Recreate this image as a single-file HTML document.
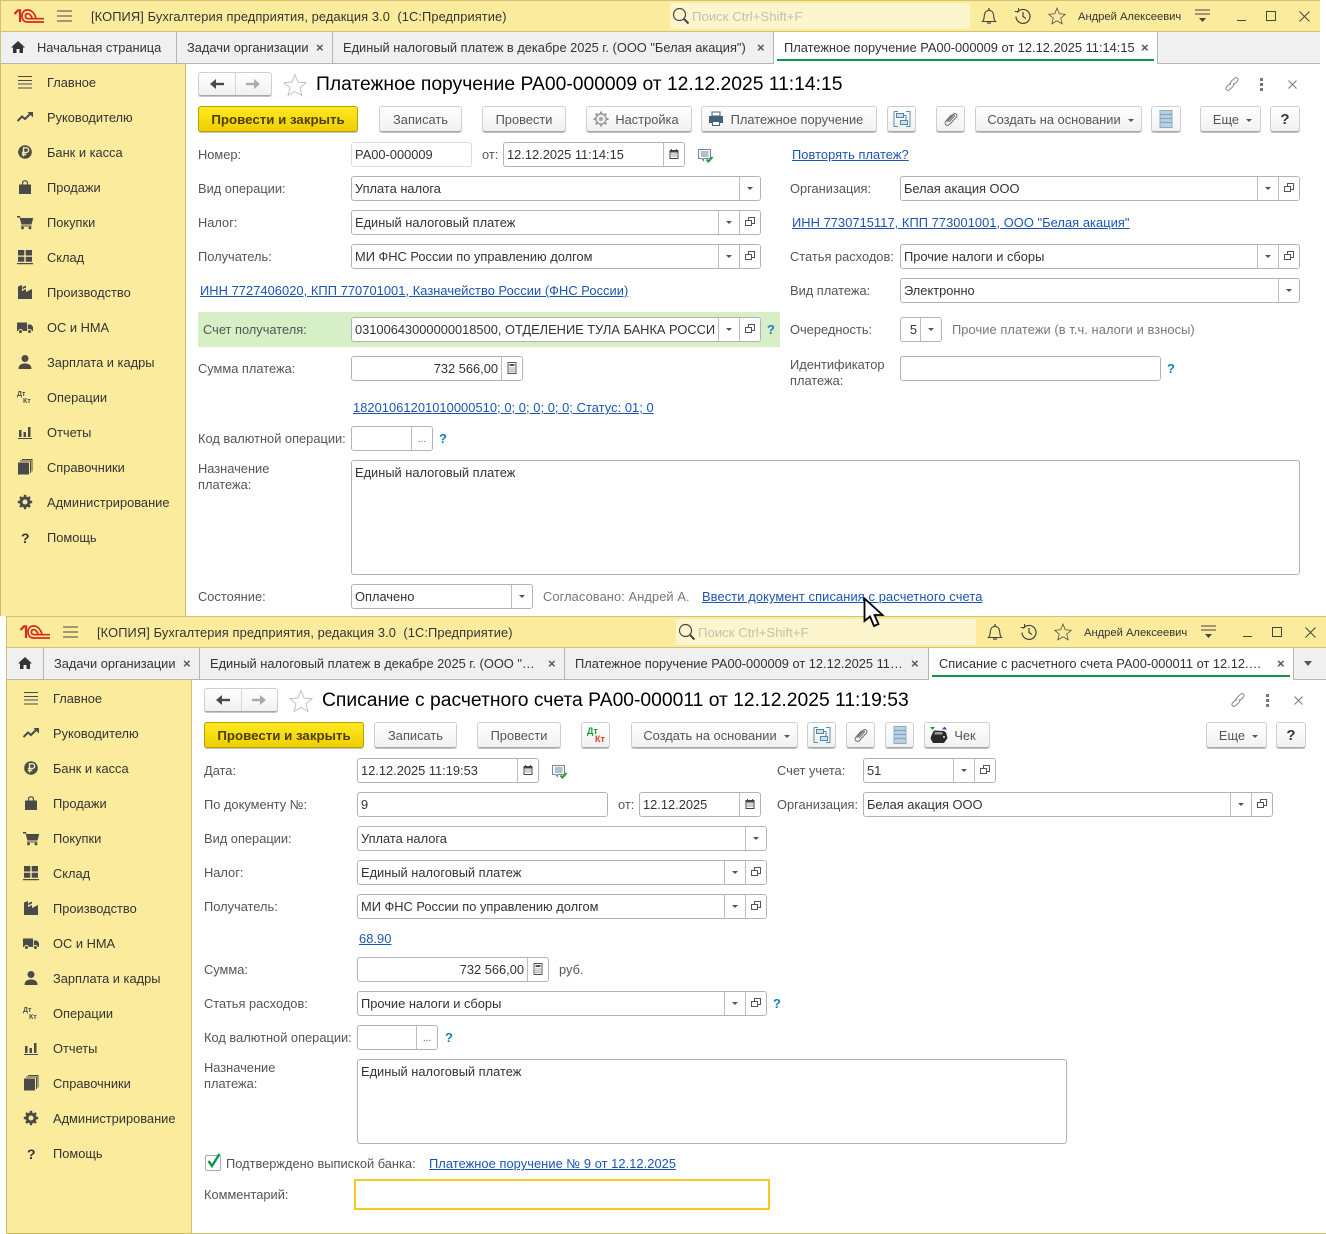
<!DOCTYPE html>
<html lang="ru"><head><meta charset="utf-8"><title>1С</title>
<style>
html,body{margin:0;padding:0;background:#fff}
body{width:1326px;height:1234px;position:relative;overflow:hidden;font:12.85px/16px "Liberation Sans",sans-serif;color:#333}
.w{position:absolute;width:1320px;overflow:hidden;background:#fff}
.t,.f,.b,.ta,svg.i{position:absolute}
.t{white-space:nowrap;margin-top:1px}
.l{color:#555}
.a{color:#1a55b5;text-decoration:underline;letter-spacing:.06px}
.q{color:#0f7fb8;font-weight:bold}
.top{position:absolute;left:0;top:0;right:0;height:32px;background:#fbec9d;box-sizing:border-box;border:1px solid #cfc36f;border-width:1px 0 1px 1px}
.tabs{position:absolute;left:0;top:32px;right:0;height:32px;background:#f0f0f0;box-sizing:border-box;border-bottom:1px solid #b5b5b5;border-left:1px solid #cfc36f}
.dv{position:absolute;top:32px;height:31px;width:1px;background:#b5b5b5}
.at{position:absolute;top:32px;height:32px;background:#fff}
.gr{position:absolute;top:59px;height:2px;background:#0d9548}
.sb{position:absolute;left:0;top:64px;width:186px;background:#fbec9d;box-sizing:border-box;border-left:1px solid #c9bd5f;border-right:1px solid #cfc36f}
.search{position:absolute;left:670px;top:3px;width:300px;height:26px;background:#fcf5cd;border-radius:3px}
.x{color:#555;font-weight:bold;font-size:13px}
.f{box-sizing:border-box;height:25px;border:1px solid #b3b3b3;border-radius:3px;background:#fff;padding-left:3px;line-height:23px;overflow:hidden;white-space:nowrap;color:#333}
.ta{box-sizing:border-box;border:1px solid #b3b3b3;border-radius:3px;background:#fff;padding:4px 3px;color:#333}
.r{position:absolute;right:0;top:0;bottom:0;display:flex;background:#fff}
.r>span{position:relative;display:block;width:20px;border-left:1px solid #bdbdbd}
.dr::after{content:"";position:absolute;left:7px;top:10px;border:3px solid transparent;border-top:3px solid #555;border-bottom:0}
.op::before{content:"";position:absolute;left:8px;top:6px;width:5px;height:5px;border:1px solid #555}
.op::after{content:"";position:absolute;left:5px;top:9px;width:5px;height:4px;border:1px solid #555;background:#fff}
.dots{text-align:center;font-size:10px;color:#666;line-height:25px}
.b{top:106px;height:26px;box-sizing:border-box;border:1px solid #cfcfcf;border-bottom-color:#a8a8a8;border-radius:3px;background:linear-gradient(#fff,#f1f1f1);box-shadow:0 1px 0 #c4c4c4;text-align:center;line-height:25px;color:#555;white-space:nowrap}
.y{background:linear-gradient(#ffe924,#efcf00);border:1px solid #b8a000;color:#4d3f00;font-weight:bold;font-size:13.3px}
.car{display:inline-block;width:0;height:0;border:3px solid transparent;border-top-color:#555;border-bottom:0;margin-left:7px;vertical-align:2px}
.s{font-size:13.2px;color:#c4c1ad}
.h{font-size:19.3px;line-height:22px;color:#000}
.tt{letter-spacing:.1px}
</style></head><body>
<svg width="0" height="0" style="position:absolute">
<defs>
<symbol id="logo" viewBox="0 0 30 14"><path d="M.5 5 4 1.300H6V13" fill="none" stroke="#d62a1c" stroke-width="2.200"/><path d="M22 9.500C20.500 3.500 17 1 13.500 1 9.500 1 8 4 8 7 8 11 10.500 13 13.500 13H30M18.300 9.500C17 6 15.500 4.600 13.500 4.600 12 4.600 11.400 6 11.400 7 11.400 8.500 12.300 9.700 14 9.700H30" fill="none" stroke="#d62a1c" stroke-width="1.700"/></symbol>
<symbol id="s0" viewBox="0 0 16 16"><path d="M1 2.500h14M1 6.500h14M1 10h14M1 14h14" stroke="#4a4a4a"/></symbol>
<symbol id="s1" viewBox="0 0 16 16"><path d="M0.500 12 5 7.500 8 10 14 4" fill="none" stroke="#4a4a4a" stroke-width="2"/><path d="M10.500 3H16V8.500z" fill="#4a4a4a"/></symbol>
<symbol id="s2" viewBox="0 0 16 16"><circle cx="8" cy="8" r="6.800" fill="#4a4a4a"/><path d="M6.500 12.500V3.800H9.300a2.300 2.300 0 0 1 0 4.700H4.800M4.800 10.500h4.500" fill="none" stroke="#fbec9d" stroke-width="1.400"/></symbol>
<symbol id="s3" viewBox="0 0 16 16"><path d="M2 5.500H5V3.500C5 .5 11 .5 11 3.500V5.500H14V15H2z" fill="#4a4a4a"/><path d="M6.200 5.500V3.500C6.200 2 9.800 2 9.800 3.500V5.500" fill="#fbec9d"/></symbol>
<symbol id="s4" viewBox="0 0 16 16"><path d="M0 2H3L3.500 4H16V5L14.500 10.500H4.500L2.500 3.500H0z" fill="#4a4a4a"/><path d="M4 11.500H14.500V12.500H4z" fill="#4a4a4a"/><circle cx="5.500" cy="14" r="1.400" fill="#4a4a4a"/><circle cx="13" cy="14" r="1.400" fill="#4a4a4a"/></symbol>
<symbol id="s5" viewBox="0 0 16 16"><path d="M1 1h6.300v5.500H1zM8.700 1H15v5.500H8.700zM1 7.700h6.300v5H1zM8.700 7.700H15v5H8.700zM0 14h16v1.200H0z" fill="#4a4a4a"/></symbol>
<symbol id="s6" viewBox="0 0 16 16"><path d="M1 15V2.500L5 1V7L9 5V8L15 5V15z" fill="#4a4a4a"/><path d="M5.500 3 9 1.600V3.500L5.500 5.300z" fill="#4a4a4a"/></symbol>
<symbol id="s7" viewBox="0 0 16 16"><path d="M0 3.500H10V12H0zM10.800 5.500H14L16 8V12H10.800z" fill="#4a4a4a"/><circle cx="3.500" cy="12.500" r="2" fill="#4a4a4a" stroke="#fbec9d"/><circle cx="12.500" cy="12.500" r="2" fill="#4a4a4a" stroke="#fbec9d"/></symbol>
<symbol id="s8" viewBox="0 0 16 16"><circle cx="8" cy="4.500" r="3.500" fill="#4a4a4a"/><path d="M1.500 15C1.500 10.500 5 9.500 8 9.500S14.500 10.500 14.500 15z" fill="#4a4a4a"/></symbol>
<symbol id="s9" viewBox="0 0 16 16"><text x="0" y="7" font-family="Liberation Sans" font-size="7" font-weight="bold" fill="#4a4a4a">Дт</text><text x="6" y="14" font-family="Liberation Sans" font-size="7" font-weight="bold" fill="#4a4a4a">Кт</text></symbol>
<symbol id="s10" viewBox="0 0 16 16"><path d="M2 6h2.500v7H2zM6.500 8H9v5H6.500zM11 3h2.500v10H11zM1 14h14v1H1z" fill="#4a4a4a"/></symbol>
<symbol id="s11" viewBox="0 0 16 16"><path d="M1 3.500h11V15.500H1z" fill="#4a4a4a"/><path d="M3 2h10.500v12M5 .5h10v12" fill="none" stroke="#4a4a4a"/></symbol>
<symbol id="s12" viewBox="0 0 16 16"><circle cx="8" cy="8" r="4" fill="none" stroke="#4a4a4a" stroke-width="3"/><path d="M8 .8V3.500M8 12.500v2.700M.8 8h2.700M12.500 8h2.700M3 3l1.900 1.900M11.100 11.100 13 13M13 3l-1.900 1.900M4.900 11.100 3 13" stroke="#4a4a4a" stroke-width="2.400"/></symbol>
<symbol id="cal" viewBox="0 0 12 12"><path d="M1.500 2H3V1h1v1h4V1h1v1h1.500V11H1.500z" fill="#444"/><path d="M2.500 4.500h7V10h-7z" fill="#fff"/><path d="M3.500 5.500h1v1h-1zM5.500 5.500h1v1h-1zM7.500 5.500h1v1h-1zM3.500 7.500h1v1h-1zM5.500 7.500h1v1h-1zM7.500 7.500h1v1h-1z" fill="#444"/></symbol>
<symbol id="calc" viewBox="0 0 12 12"><path d="M2 .5h8v11H2z" fill="#fff" stroke="#555"/><path d="M3.500 2h5v2h-5zM3.500 5.500h1v1h-1zM5.500 5.500h1v1h-1zM7.500 5.500h1v1h-1zM3.500 7.500h1v1h-1zM5.500 7.500h1v1h-1zM7.500 7.500h1v1h-1zM3.500 9.200h1v1h-1zM5.500 9.200h1v1h-1zM7.500 9.200h1v1h-1z" fill="#555"/></symbol>
<symbol id="doc" viewBox="0 0 16 14"><path d="M.5.500h12v9h-7v2l-2-2h-3z" fill="#f4f6f7" stroke="#6f8b9b"/><path d="M3 3h7.500M3 5h7.500M3 7h7.500" stroke="#6f8b9b"/><path d="M8.500 10.500 10.500 12.500 14.500 8" fill="none" stroke="#21a038" stroke-width="2"/></symbol>
<symbol id="str" viewBox="0 0 18 18"><path d="M1 1.500H5M1 1.500V16.500H5M13 1.500H17V16.500H13" fill="none" stroke="#5b8fb0"/><path d="M3.500 3.500h7v4h-7zM7.500 10.500h7v4h-7z" fill="#cfe2ee" stroke="#4d87ac"/><path d="M10.500 5.500H13V10" fill="none" stroke="#4d87ac"/></symbol>
<symbol id="clip" viewBox="0 0 16 16"><path d="M4 10.500 10 3.500C12.500 1 15.500 4 13 6.500L6.500 13.500C4 16 .5 13 3 10L8.500 3.800M6 11 11 5.500C12 4.300 10.800 3.300 9.800 4.500L4.500 10.500" fill="none" stroke="#777" stroke-width="1.100"/></symbol>
<symbol id="lst" viewBox="0 0 14 18"><path d="M1 .5h12v17H1z" fill="#bcd1e0" stroke="#8aaec6"/><path d="M1 4.500h12M1 8.500h12M1 12.500h12" stroke="#7fa5bf" stroke-width="1.200"/></symbol>
<symbol id="prn" viewBox="0 0 16 16"><path d="M4 1h8v4H4z" fill="#fff" stroke="#44617b"/><path d="M1 5h14v7h-3v-2H4v2H1z" fill="#44617b"/><path d="M4.500 10.500h7v4h-7z" fill="#fff" stroke="#44617b"/></symbol>
<symbol id="gear" viewBox="0 0 16 16"><circle cx="8" cy="8" r="5.200" fill="#eee" stroke="#999" stroke-width="1.400"/><circle cx="8" cy="8" r="2" fill="#aaa"/><path d="M8 .5V2.500M8 13.500v2M.5 8h2M13.500 8h2M2.700 2.700 4.200 4.200M11.800 11.800l1.500 1.500M13.300 2.700 11.800 4.200M4.200 11.800l-1.500 1.500" stroke="#999" stroke-width="2"/></symbol>
<symbol id="lens" viewBox="0 0 18 18"><circle cx="7.500" cy="7.500" r="6" fill="none" stroke="#444" stroke-width="1.200"/><path d="M12 12l4.500 4.500" stroke="#444" stroke-width="2"/></symbol>
<symbol id="bell" viewBox="0 0 18 18"><path d="M2.500 14.500C4.500 12.500 4 10 4.500 7.500C5 4.500 7 3.500 9 3.500S13 4.500 13.500 7.500C14 10 13.500 12.500 15.500 14.500z" fill="none" stroke="#444" stroke-width="1.100"/><path d="M9 1v2.500M7 16h4" stroke="#444" stroke-width="1.300"/></symbol>
<symbol id="hist" viewBox="0 0 18 18"><path d="M3.200 5.500A7 7 0 1 1 2 9.500" fill="none" stroke="#444" stroke-width="1.200"/><path d="M.8 4.500H4.500V1" fill="none" stroke="#444"/><path d="M9 5V9.500L12 11.500" fill="none" stroke="#444" stroke-width="1.200"/></symbol>
<symbol id="star" viewBox="0 0 24 24"><path d="M12 1.500 15 9 23 9.700 17 14.800 18.900 22.500 12 18.400 5.100 22.500 7 14.800 1 9.700 9 9z" fill="none" stroke="currentColor"/></symbol>
<symbol id="lnk" viewBox="0 0 16 16"><path d="M6.500 7 4 9.500 2.500 11C1 13 3 15.500 5.200 14L9 10.500C10 9 9.500 8 9 7.500M9.500 9 12 6.500 13.500 5C15 3 13 .5 10.800 2L7 5.500C6 7 6.500 8 7 8.500" fill="none" stroke="#888" stroke-width="1"/></symbol>
<symbol id="home" viewBox="0 0 14 14"><path d="M7 1 14 7.500H12V13H8.500V9H5.500V13H2V7.500H0z" fill="#333"/></symbol>
<symbol id="ham" viewBox="0 0 16 14"><path d="M0 2h15M0 7h15M0 12h15" stroke="#444" stroke-width="1"/></symbol>
<symbol id="usr" viewBox="0 0 16 14"><path d="M0 1h15M0 5h15" stroke="#444"/><path d="M4 9h7L7.500 13z" fill="#444"/></symbol>
<symbol id="dtkt" viewBox="0 0 22 18"><text x="2" y="8" font-family="Liberation Sans" font-size="9" font-weight="bold" fill="#0d9d3a">Дт</text><text x="10" y="16" font-family="Liberation Sans" font-size="9" font-weight="bold" fill="#e8352a">Кт</text></symbol>
<symbol id="chk" viewBox="0 0 20 20"><path d="M1 2h5L3.500 5z" fill="#0d9d3a"/><path d="M13 4.500h5L15.500 1.500z" fill="#2c4ca8"/><path d="M5 5.500 15 6 17 7.500 18.500 13 15 18H4L1.500 13.500 3 9z" fill="#2a2a2a"/><path d="M6 7h7l1 2.500H5z" fill="#999"/><circle cx="15" cy="12" r="1" fill="#eee"/></symbol>
</defs></svg>

<!-- WINDOW 1 -->
<div class="w" style="left:0;top:0;height:616px">
<div class="top"></div>
<svg class="i" style="left:14px;top:9px" width="30" height="14"><use href="#logo"/></svg>
<svg class="i" style="left:57px;top:9px" width="16" height="14"><use href="#ham"/></svg>
<div class="t tt" style="left:91px;top:8px">[КОПИЯ] Бухгалтерия предприятия, редакция 3.0&nbsp; (1С:Предприятие)</div>
<div class="search"></div>
<svg class="i" style="left:672px;top:7px" width="18" height="18"><use href="#lens"/></svg>
<div class="t s" style="left:692px;top:8px">Поиск Ctrl+Shift+F</div>
<svg class="i" style="left:980px;top:7px" width="18" height="18"><use href="#bell"/></svg>
<svg class="i" style="left:1014px;top:7px" width="18" height="18"><use href="#hist"/></svg>
<svg class="i" style="left:1048px;top:7px;color:#444" width="18" height="18"><use href="#star"/></svg>
<div class="t" style="left:1078px;top:8px;font-size:11.2px">Андрей Алексеевич</div>
<svg class="i" style="left:1195px;top:9px" width="16" height="14"><use href="#usr"/></svg>
<div style="position:absolute;left:1237px;top:20px;width:9px;height:1px;background:#444"></div>
<div style="position:absolute;left:1266px;top:11px;width:8px;height:8px;border:1px solid #444"></div>
<svg class="i" style="left:1299px;top:11px" width="11" height="11"><path d="M.5.5l10 10M10.500.5l-10 10" stroke="#444"/></svg>

<div class="tabs"></div>
<svg class="i" style="left:11px;top:40px" width="14" height="14"><use href="#home"/></svg>
<div class="t" style="left:37px;top:39px">Начальная страница</div>
<div class="dv" style="left:176px"></div>
<div class="t" style="left:187px;top:39px">Задачи организации</div><div class="t x" style="left:316px;top:39px">×</div>
<div class="dv" style="left:332px"></div>
<div class="t" style="left:343px;top:39px">Единый налоговый платеж в декабре 2025 г. (ООО "Белая акация")</div><div class="t x" style="left:757px;top:39px">×</div>
<div class="dv" style="left:773px"></div>
<div class="at" style="left:774px;width:383px"></div><div class="gr" style="left:777px;width:377px"></div>
<div class="t" style="left:784px;top:39px">Платежное поручение РА00-000009 от 12.12.2025 11:14:15</div><div class="t x" style="left:1141px;top:39px">×</div>
<div class="dv" style="left:1157px"></div>

<div class="sb" style="height:552px">
<svg class="i" style="left:16px;top:10px" width="16" height="16"><use href="#s0"/></svg><div class="t" style="left:46px;top:10px">Главное</div>
<svg class="i" style="left:16px;top:45px" width="16" height="16"><use href="#s1"/></svg><div class="t" style="left:46px;top:45px">Руководителю</div>
<svg class="i" style="left:16px;top:80px" width="16" height="16"><use href="#s2"/></svg><div class="t" style="left:46px;top:80px">Банк и касса</div>
<svg class="i" style="left:16px;top:115px" width="16" height="16"><use href="#s3"/></svg><div class="t" style="left:46px;top:115px">Продажи</div>
<svg class="i" style="left:16px;top:150px" width="16" height="16"><use href="#s4"/></svg><div class="t" style="left:46px;top:150px">Покупки</div>
<svg class="i" style="left:16px;top:185px" width="16" height="16"><use href="#s5"/></svg><div class="t" style="left:46px;top:185px">Склад</div>
<svg class="i" style="left:16px;top:220px" width="16" height="16"><use href="#s6"/></svg><div class="t" style="left:46px;top:220px">Производство</div>
<svg class="i" style="left:16px;top:255px" width="16" height="16"><use href="#s7"/></svg><div class="t" style="left:46px;top:255px">ОС и НМА</div>
<svg class="i" style="left:16px;top:290px" width="16" height="16"><use href="#s8"/></svg><div class="t" style="left:46px;top:290px">Зарплата и кадры</div>
<svg class="i" style="left:16px;top:325px" width="16" height="16"><use href="#s9"/></svg><div class="t" style="left:46px;top:325px">Операции</div>
<svg class="i" style="left:16px;top:360px" width="16" height="16"><use href="#s10"/></svg><div class="t" style="left:46px;top:360px">Отчеты</div>
<svg class="i" style="left:16px;top:395px" width="16" height="16"><use href="#s11"/></svg><div class="t" style="left:46px;top:395px">Справочники</div>
<svg class="i" style="left:16px;top:430px" width="16" height="16"><use href="#s12"/></svg><div class="t" style="left:46px;top:430px">Администрирование</div>
<div class="t" style="left:20px;top:465px;font-weight:bold;font-size:14px">?</div><div class="t" style="left:46px;top:465px">Помощь</div>
</div>

<!-- nav -->
<div class="b" style="left:198px;top:72px;width:74px;height:24px"></div>
<div style="position:absolute;left:235px;top:73px;width:1px;height:22px;background:#d5d5d5"></div>
<svg class="i" style="left:210px;top:79px" width="14" height="10"><path d="M14 5H5" stroke="#4a4a4a" stroke-width="2.400"/><path d="M6 0 0 5 6 10z" fill="#4a4a4a"/></svg>
<svg class="i" style="left:246px;top:79px" width="14" height="10"><path d="M0 5H9" stroke="#aaa" stroke-width="2.400"/><path d="M8 0 14 5 8 10z" fill="#aaa"/></svg>
<svg class="i" style="left:283px;top:73px;color:#c2c2c2" width="24" height="24"><use href="#star"/></svg>
<div class="t h" style="left:316px;top:73px">Платежное поручение РА00-000009 от 12.12.2025 11:14:15</div>
<svg class="i" style="left:1224px;top:76px" width="16" height="16"><use href="#lnk"/></svg>
<svg class="i" style="left:1260px;top:78px" width="4" height="13"><path d="M0 0h3v3H0zM0 5h3v3H0zM0 10h3v3H0z" fill="#777"/></svg>
<svg class="i" style="left:1288px;top:80px" width="9" height="9"><path d="M.5.5l8 8M8.500.5l-8 8" stroke="#777"/></svg>

<!-- toolbar -->
<div class="b y" style="left:198px;width:160px">Провести и закрыть</div>
<div class="b" style="left:379px;width:83px">Записать</div>
<div class="b" style="left:482px;width:84px">Провести</div>
<div class="b" style="left:586px;width:106px;padding-left:16px">Настройка</div><svg class="i" style="left:593px;top:111px" width="16" height="16"><use href="#gear"/></svg>
<div class="b" style="left:701px;width:176px;padding-left:16px">Платежное поручение</div><svg class="i" style="left:708px;top:111px" width="16" height="16"><use href="#prn"/></svg>
<div class="b" style="left:887px;width:29px"></div><svg class="i" style="left:893px;top:110px" width="18" height="18"><use href="#str"/></svg>
<div class="b" style="left:936px;width:29px"></div><svg class="i" style="left:943px;top:111px" width="16" height="16"><use href="#clip"/></svg>
<div class="b" style="left:975px;width:167px;padding-left:4px">Создать на основании<span class="car"></span></div>
<div class="b" style="left:1151px;width:30px"></div><svg class="i" style="left:1159px;top:110px" width="14" height="18"><use href="#lst"/></svg>
<div class="b" style="left:1200px;width:61px;padding-left:4px">Еще<span class="car"></span></div>
<div class="b" style="left:1270px;width:30px;font-size:15px;font-weight:bold;color:#333">?</div>

<!-- form left -->
<div class="t l" style="left:198px;top:146px">Номер:</div>
<div class="f" style="left:351px;top:142px;width:121px;border-color:#ddd">РА00-000009</div>
<div class="t l" style="left:482px;top:146px">от:</div>
<div class="f" style="left:503px;top:142px;width:182px">12.12.2025 11:14:15<span class="r"><span><svg class="i" style="left:4px;top:5px" width="12" height="12"><use href="#cal"/></svg></span></span></div>
<svg class="i" style="left:698px;top:149px" width="16" height="14"><use href="#doc"/></svg>
<div class="t a" style="left:792px;top:146px">Повторять платеж?</div>

<div class="t l" style="left:198px;top:180px">Вид операции:</div>
<div class="f" style="left:351px;top:176px;width:410px">Уплата налога<span class="r"><span class="dr"></span></span></div>
<div class="t l" style="left:198px;top:214px">Налог:</div>
<div class="f" style="left:351px;top:210px;width:410px">Единый налоговый платеж<span class="r"><span class="dr"></span><span class="op"></span></span></div>
<div class="t l" style="left:198px;top:248px">Получатель:</div>
<div class="f" style="left:351px;top:244px;width:410px">МИ ФНС России по управлению долгом<span class="r"><span class="dr"></span><span class="op"></span></span></div>
<div class="t a" style="left:200px;top:282px">ИНН 7727406020, КПП 770701001, Казначейство России (ФНС России)</div>
<div style="position:absolute;left:198px;top:312px;width:582px;height:35px;background:#d6efc6"></div>
<div class="t l" style="left:203px;top:321px">Счет получателя:</div>
<div class="f" style="left:351px;top:317px;width:410px"><span style="display:inline-block;width:361px;overflow:hidden;vertical-align:top">03100643000000018500, ОТДЕЛЕНИЕ ТУЛА БАНКА РОССИИ//УФК по Тульской области</span><span class="r"><span class="dr"></span><span class="op"></span></span></div>
<div class="t q" style="left:767px;top:321px">?</div>
<div class="t l" style="left:198px;top:360px">Сумма платежа:</div>
<div class="f" style="left:351px;top:356px;width:172px;text-align:right;padding-right:24px">732 566,00<span class="r"><span><svg class="i" style="left:4px;top:5px" width="12" height="12"><use href="#calc"/></svg></span></span></div>
<div class="t a" style="left:353px;top:399px">18201061201010000510; 0; 0; 0; 0; 0; Статус: 01; 0</div>
<div class="t l" style="left:198px;top:430px">Код валютной операции:</div>
<div class="f" style="left:351px;top:426px;width:82px"><span class="r"><span class="dots">...</span></span></div>
<div class="t q" style="left:439px;top:430px">?</div>
<div class="t l" style="left:198px;top:460px">Назначение<br>платежа:</div>
<div class="ta" style="left:351px;top:460px;width:949px;height:115px">Единый налоговый платеж</div>
<div class="t l" style="left:198px;top:588px">Состояние:</div>
<div class="f" style="left:351px;top:584px;width:182px">Оплачено<span class="r"><span class="dr"></span></span></div>
<div class="t" style="left:543px;top:588px;color:#777;letter-spacing:.09px">Согласовано: Андрей А.</div>
<div class="t a" style="left:702px;top:588px;letter-spacing:.12px">Ввести документ списания с расчетного счета</div>

<!-- form right -->
<div class="t l" style="left:790px;top:180px">Организация:</div>
<div class="f" style="left:900px;top:176px;width:400px">Белая акация ООО<span class="r"><span class="dr"></span><span class="op"></span></span></div>
<div class="t a" style="left:792px;top:214px">ИНН 7730715117, КПП 773001001, ООО "Белая акация"</div>
<div class="t l" style="left:790px;top:248px">Статья расходов:</div>
<div class="f" style="left:900px;top:244px;width:400px">Прочие налоги и сборы<span class="r"><span class="dr"></span><span class="op"></span></span></div>
<div class="t l" style="left:790px;top:282px">Вид платежа:</div>
<div class="f" style="left:900px;top:278px;width:400px">Электронно<span class="r"><span class="dr"></span></span></div>
<div class="t l" style="left:790px;top:321px">Очередность:</div>
<div class="f" style="left:900px;top:317px;width:42px;text-align:right;padding-right:24px">5<span class="r"><span class="dr"></span></span></div>
<div class="t" style="left:952px;top:321px;color:#777;letter-spacing:.08px">Прочие платежи (в т.ч. налоги и взносы)</div>
<div class="t l" style="left:790px;top:356px">Идентификатор<br>платежа:</div>
<div class="f" style="left:900px;top:356px;width:261px"></div>
<div class="t q" style="left:1167px;top:360px">?</div>
</div>

<!-- WINDOW 2 -->
<div class="w" style="left:6px;top:616px;height:618px">
<div class="top"></div>
<svg class="i" style="left:14px;top:9px" width="30" height="14"><use href="#logo"/></svg>
<svg class="i" style="left:57px;top:9px" width="16" height="14"><use href="#ham"/></svg>
<div class="t tt" style="left:91px;top:8px">[КОПИЯ] Бухгалтерия предприятия, редакция 3.0&nbsp; (1С:Предприятие)</div>
<div class="search"></div>
<svg class="i" style="left:672px;top:7px" width="18" height="18"><use href="#lens"/></svg>
<div class="t s" style="left:692px;top:8px">Поиск Ctrl+Shift+F</div>
<svg class="i" style="left:980px;top:7px" width="18" height="18"><use href="#bell"/></svg>
<svg class="i" style="left:1014px;top:7px" width="18" height="18"><use href="#hist"/></svg>
<svg class="i" style="left:1048px;top:7px;color:#444" width="18" height="18"><use href="#star"/></svg>
<div class="t" style="left:1078px;top:8px;font-size:11.2px">Андрей Алексеевич</div>
<svg class="i" style="left:1195px;top:9px" width="16" height="14"><use href="#usr"/></svg>
<div style="position:absolute;left:1237px;top:20px;width:9px;height:1px;background:#444"></div>
<div style="position:absolute;left:1266px;top:11px;width:8px;height:8px;border:1px solid #444"></div>
<svg class="i" style="left:1299px;top:11px" width="11" height="11"><path d="M.5.5l10 10M10.500.5l-10 10" stroke="#444"/></svg>

<div class="tabs"></div>
<svg class="i" style="left:12px;top:40px" width="14" height="14"><use href="#home"/></svg>
<div class="dv" style="left:37px"></div>
<div class="t" style="left:48px;top:39px">Задачи организации</div><div class="t x" style="left:177px;top:39px">×</div>
<div class="dv" style="left:193px"></div>
<div class="t" style="left:204px;top:39px">Единый налоговый платеж в декабре 2025 г. (ООО "…</div><div class="t x" style="left:542px;top:39px">×</div>
<div class="dv" style="left:558px"></div>
<div class="t" style="left:569px;top:39px">Платежное поручение РА00-000009 от 12.12.2025 11…</div><div class="t x" style="left:905px;top:39px">×</div>
<div class="dv" style="left:922px"></div>
<div class="at" style="left:923px;width:364px"></div><div class="gr" style="left:926px;width:358px"></div>
<div class="t" style="left:933px;top:39px">Списание с расчетного счета РА00-000011 от 12.12.…</div><div class="t x" style="left:1271px;top:39px">×</div>
<div class="dv" style="left:1287px"></div>
<div style="position:absolute;left:1298px;top:45px;border:4px solid transparent;border-top:5px solid #555;border-bottom:0"></div>

<div class="sb" style="height:554px;width:186px;border-bottom:1px solid #c9bd5f">
<svg class="i" style="left:16px;top:10px" width="16" height="16"><use href="#s0"/></svg><div class="t" style="left:46px;top:10px">Главное</div>
<svg class="i" style="left:16px;top:45px" width="16" height="16"><use href="#s1"/></svg><div class="t" style="left:46px;top:45px">Руководителю</div>
<svg class="i" style="left:16px;top:80px" width="16" height="16"><use href="#s2"/></svg><div class="t" style="left:46px;top:80px">Банк и касса</div>
<svg class="i" style="left:16px;top:115px" width="16" height="16"><use href="#s3"/></svg><div class="t" style="left:46px;top:115px">Продажи</div>
<svg class="i" style="left:16px;top:150px" width="16" height="16"><use href="#s4"/></svg><div class="t" style="left:46px;top:150px">Покупки</div>
<svg class="i" style="left:16px;top:185px" width="16" height="16"><use href="#s5"/></svg><div class="t" style="left:46px;top:185px">Склад</div>
<svg class="i" style="left:16px;top:220px" width="16" height="16"><use href="#s6"/></svg><div class="t" style="left:46px;top:220px">Производство</div>
<svg class="i" style="left:16px;top:255px" width="16" height="16"><use href="#s7"/></svg><div class="t" style="left:46px;top:255px">ОС и НМА</div>
<svg class="i" style="left:16px;top:290px" width="16" height="16"><use href="#s8"/></svg><div class="t" style="left:46px;top:290px">Зарплата и кадры</div>
<svg class="i" style="left:16px;top:325px" width="16" height="16"><use href="#s9"/></svg><div class="t" style="left:46px;top:325px">Операции</div>
<svg class="i" style="left:16px;top:360px" width="16" height="16"><use href="#s10"/></svg><div class="t" style="left:46px;top:360px">Отчеты</div>
<svg class="i" style="left:16px;top:395px" width="16" height="16"><use href="#s11"/></svg><div class="t" style="left:46px;top:395px">Справочники</div>
<svg class="i" style="left:16px;top:430px" width="16" height="16"><use href="#s12"/></svg><div class="t" style="left:46px;top:430px">Администрирование</div>
<div class="t" style="left:20px;top:465px;font-weight:bold;font-size:14px">?</div><div class="t" style="left:46px;top:465px">Помощь</div>
</div>
<div style="position:absolute;left:0;top:617px;width:1320px;height:1px;background:#c9bd5f"></div>

<div class="b" style="left:198px;top:72px;width:74px;height:24px"></div>
<div style="position:absolute;left:235px;top:73px;width:1px;height:22px;background:#d5d5d5"></div>
<svg class="i" style="left:210px;top:79px" width="14" height="10"><path d="M14 5H5" stroke="#4a4a4a" stroke-width="2.400"/><path d="M6 0 0 5 6 10z" fill="#4a4a4a"/></svg>
<svg class="i" style="left:246px;top:79px" width="14" height="10"><path d="M0 5H9" stroke="#aaa" stroke-width="2.400"/><path d="M8 0 14 5 8 10z" fill="#aaa"/></svg>
<svg class="i" style="left:283px;top:73px;color:#c2c2c2" width="24" height="24"><use href="#star"/></svg>
<div class="t h" style="left:316px;top:73px">Списание с расчетного счета РА00-000011 от 12.12.2025 11:19:53</div>
<svg class="i" style="left:1224px;top:76px" width="16" height="16"><use href="#lnk"/></svg>
<svg class="i" style="left:1260px;top:78px" width="4" height="13"><path d="M0 0h3v3H0zM0 5h3v3H0zM0 10h3v3H0z" fill="#777"/></svg>
<svg class="i" style="left:1288px;top:80px" width="9" height="9"><path d="M.5.5l8 8M8.500.5l-8 8" stroke="#777"/></svg>

<div class="b y" style="left:198px;width:160px">Провести и закрыть</div>
<div class="b" style="left:368px;width:83px">Записать</div>
<div class="b" style="left:471px;width:84px">Провести</div>
<div class="b" style="left:575px;width:29px"></div><svg class="i" style="left:579px;top:110px" width="22" height="18"><use href="#dtkt"/></svg>
<div class="b" style="left:625px;width:167px;padding-left:4px">Создать на основании<span class="car"></span></div>
<div class="b" style="left:801px;width:29px"></div><svg class="i" style="left:807px;top:110px" width="18" height="18"><use href="#str"/></svg>
<div class="b" style="left:840px;width:29px"></div><svg class="i" style="left:847px;top:111px" width="16" height="16"><use href="#clip"/></svg>
<div class="b" style="left:879px;width:29px"></div><svg class="i" style="left:887px;top:110px" width="14" height="18"><use href="#lst"/></svg>
<div class="b" style="left:918px;width:66px;padding-left:16px">Чек</div><svg class="i" style="left:923px;top:109px" width="20" height="20"><use href="#chk"/></svg>
<div class="b" style="left:1200px;width:61px;padding-left:4px">Еще<span class="car"></span></div>
<div class="b" style="left:1270px;width:30px;font-size:15px;font-weight:bold;color:#333">?</div>

<div class="t l" style="left:198px;top:146px">Дата:</div>
<div class="f" style="left:351px;top:142px;width:182px">12.12.2025 11:19:53<span class="r"><span><svg class="i" style="left:4px;top:5px" width="12" height="12"><use href="#cal"/></svg></span></span></div>
<svg class="i" style="left:546px;top:149px" width="16" height="14"><use href="#doc"/></svg>
<div class="t l" style="left:771px;top:146px">Счет учета:</div>
<div class="f" style="left:857px;top:142px;width:133px">51<span class="r"><span class="dr"></span><span class="op"></span></span></div>
<div class="t l" style="left:198px;top:180px">По документу №:</div>
<div class="f" style="left:351px;top:176px;width:251px">9</div>
<div class="t l" style="left:612px;top:180px">от:</div>
<div class="f" style="left:633px;top:176px;width:122px">12.12.2025<span class="r"><span><svg class="i" style="left:4px;top:5px" width="12" height="12"><use href="#cal"/></svg></span></span></div>
<div class="t l" style="left:771px;top:180px">Организация:</div>
<div class="f" style="left:857px;top:176px;width:410px">Белая акация ООО<span class="r"><span class="dr"></span><span class="op"></span></span></div>
<div class="t l" style="left:198px;top:214px">Вид операции:</div>
<div class="f" style="left:351px;top:210px;width:410px">Уплата налога<span class="r"><span class="dr"></span></span></div>
<div class="t l" style="left:198px;top:248px">Налог:</div>
<div class="f" style="left:351px;top:244px;width:410px">Единый налоговый платеж<span class="r"><span class="dr"></span><span class="op"></span></span></div>
<div class="t l" style="left:198px;top:282px">Получатель:</div>
<div class="f" style="left:351px;top:278px;width:410px">МИ ФНС России по управлению долгом<span class="r"><span class="dr"></span><span class="op"></span></span></div>
<div class="t a" style="left:353px;top:314px">68.90</div>
<div class="t l" style="left:198px;top:345px">Сумма:</div>
<div class="f" style="left:351px;top:341px;width:192px;text-align:right;padding-right:24px">732 566,00<span class="r"><span><svg class="i" style="left:4px;top:5px" width="12" height="12"><use href="#calc"/></svg></span></span></div>
<div class="t l" style="left:553px;top:345px">руб.</div>
<div class="t l" style="left:198px;top:379px">Статья расходов:</div>
<div class="f" style="left:351px;top:375px;width:410px">Прочие налоги и сборы<span class="r"><span class="dr"></span><span class="op"></span></span></div>
<div class="t q" style="left:767px;top:379px">?</div>
<div class="t l" style="left:198px;top:413px">Код валютной операции:</div>
<div class="f" style="left:351px;top:409px;width:81px"><span class="r"><span class="dots">...</span></span></div>
<div class="t q" style="left:439px;top:413px">?</div>
<div class="t l" style="left:198px;top:443px">Назначение<br>платежа:</div>
<div class="ta" style="left:351px;top:443px;width:710px;height:85px">Единый налоговый платеж</div>
<div style="position:absolute;left:199px;top:539px;width:14px;height:14px;border:1px solid #aaa;border-radius:2px;background:#fff"></div>
<svg class="i" style="left:200px;top:536px" width="16" height="17"><path d="M2.500 9 6 14 13.500 2" fill="none" stroke="#0d9548" stroke-width="2.400"/></svg>
<div class="t l" style="left:220px;top:539px">Подтверждено выпиской банка:</div>
<div class="t a" style="left:423px;top:539px">Платежное поручение № 9 от 12.12.2025</div>
<div class="t l" style="left:198px;top:570px">Комментарий:</div>
<div style="position:absolute;left:348px;top:563px;width:412px;height:27px;border:2px solid #f7c81e"></div>
</div>

<!-- cursor -->
<svg class="i" style="left:863px;top:597px" width="22" height="32"><path d="M1.500 1.500V24L7 19.500 11 29 15.500 27 11.500 18H19.500z" fill="#fff" stroke="#000" stroke-width="1.800"/></svg>
</body></html>
